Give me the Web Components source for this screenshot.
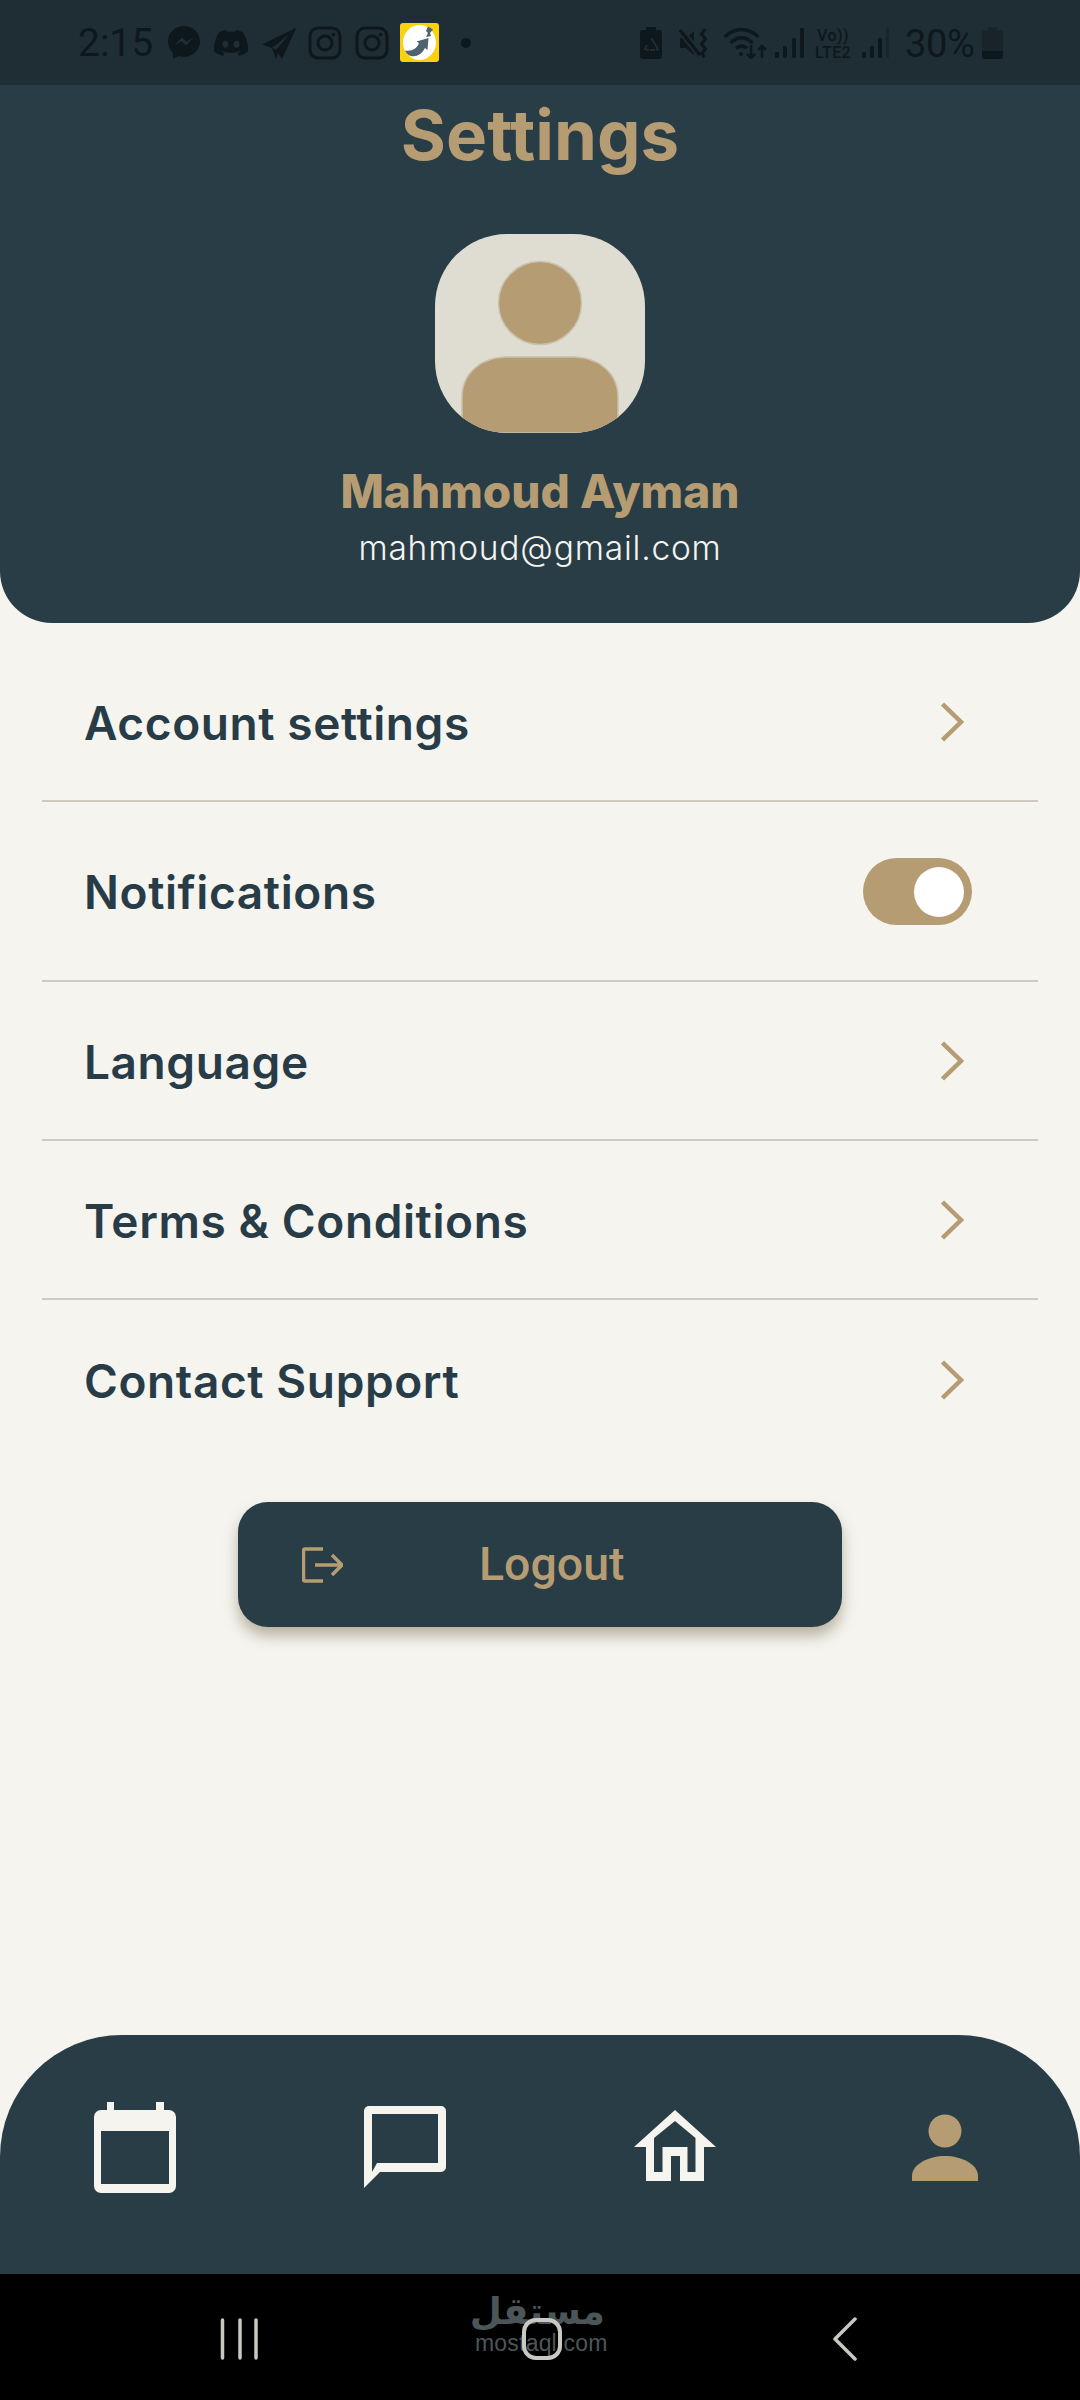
<!DOCTYPE html>
<html lang="en">
<head>
<meta charset="utf-8">
<title>Settings</title>
<style>
  html, body { margin: 0; padding: 0; }
  body {
    width: 1080px;
    height: 2400px;
    display: flex;
    flex-direction: column;
    background: #f5f4ef;
    font-family: Inter, "Noto Sans", sans-serif;
    overflow: hidden;
  }
  .spacer { flex: 1; }
</style>
</head>
<body>
  <status-bar></status-bar>
  <profile-header name="Mahmoud Ayman" email="mahmoud@gmail.com">Settings</profile-header>
  <settings-list>
    <settings-row first>Account settings</settings-row>
    <settings-row toggle>Notifications</settings-row>
    <settings-row>Language</settings-row>
    <settings-row>Terms &amp; Conditions</settings-row>
    <settings-row last>Contact Support</settings-row>
  </settings-list>
  <logout-button>Logout</logout-button>
  <div class="spacer"></div>
  <bottom-nav></bottom-nav>
  <system-nav></system-nav>

<script>
class StatusBar extends HTMLElement {
  constructor() {
    super();
    this.attachShadow({ mode: 'open' });
  }

  connectedCallback() {
    this.shadowRoot.innerHTML = `
      <style>
        :host {
          display: flex;
          align-items: center;
          justify-content: space-between;
          height: 85px;
          padding: 0 77px 0 78px;
          box-sizing: border-box;
          background: #1f2d35;
          color: #0e171c;
          font-family: Roboto, sans-serif;
        }
        .group { display: flex; align-items: center; }
        .time { font-size: 39px; font-weight: 400; width: 73px; margin-right: 16px; line-height: 1; margin-top: 2px; }
        .pct { font-size: 38px; font-weight: 400; width: 72px; margin: 0 5px 0 15px; line-height: 1; margin-top: 2px; letter-spacing: -.3px; }
        svg { display: block; flex: none; }
        .volte { width: 42px; margin: 0 8px; text-align: center; font-size: 16px; font-weight: 500; line-height: 17px; letter-spacing: .4px; margin-top: 3px; white-space: nowrap; }
      </style>
      <div class="group">
        <span class="time">2:15</span>
        <svg width="34" height="36" viewBox="0 0 34 36" fill="#0e171c">
          <path d="M17 1C8 1 1 7.600 1 16.500c0 4.700 1.900 8.700 5 11.500v6l5.600-3c1.700.5 3.500.7 5.400.7 9 0 16-6.600 16-15.200S26 1 17 1z"/>
          <path d="M7.500 20.500l7.500-8 4.500 4.300 7-4.300-7.500 8-4.500-4.300z" fill="#1f2d35"/>
        </svg>
        <svg width="34" height="34" viewBox="0 0 24 24" fill="#0e171c" style="margin-left:13px">
          <path d="M20.317 4.370a19.791 19.791 0 0 0-4.885-1.515.074.074 0 0 0-.079.037c-.21.375-.444.864-.608 1.250a18.270 18.270 0 0 0-5.487 0 12.640 12.640 0 0 0-.617-1.250.077.077 0 0 0-.079-.037A19.736 19.736 0 0 0 3.677 4.370a.07.07 0 0 0-.032.027C.533 9.046-.32 13.580.099 18.057a.082.082 0 0 0 .031.057 19.900 19.900 0 0 0 5.993 3.030.078.078 0 0 0 .084-.028c.462-.63.874-1.295 1.226-1.994a.076.076 0 0 0-.041-.106 13.107 13.107 0 0 1-1.872-.892.077.077 0 0 1-.008-.128 10.200 10.200 0 0 0 .372-.292.074.074 0 0 1 .077-.01c3.928 1.793 8.180 1.793 12.062 0a.074.074 0 0 1 .078.01c.12.098.246.198.373.292a.077.077 0 0 1-.006.127 12.299 12.299 0 0 1-1.873.892.077.077 0 0 0-.041.107c.36.698.772 1.362 1.225 1.993a.076.076 0 0 0 .084.028 19.839 19.839 0 0 0 6.002-3.030.077.077 0 0 0 .032-.054c.5-5.177-.838-9.674-3.549-13.660a.061.061 0 0 0-.031-.03zM8.020 15.330c-1.183 0-2.157-1.085-2.157-2.419 0-1.333.956-2.419 2.157-2.419 1.210 0 2.176 1.096 2.157 2.420 0 1.333-.956 2.418-2.157 2.418zm7.975 0c-1.183 0-2.157-1.085-2.157-2.419 0-1.333.955-2.419 2.157-2.419 1.210 0 2.176 1.096 2.157 2.420 0 1.333-.946 2.418-2.157 2.418z"/>
        </svg>
        <svg width="36" height="34" viewBox="0 0 36 34" fill="#0e171c" style="margin-left:13px">
          <path d="M35.500 1.500 1 18.500l10 3.500L28 8.500 15 24l1 1.500L21 33z"/>
          <path d="M11 22l4 11 3-8z"/>
        </svg>
        <svg width="34" height="34" viewBox="0 0 34 34" fill="none" stroke="#0e171c" stroke-width="3" style="margin-left:11px">
          <rect x="2" y="2" width="30" height="30" rx="8"/>
          <circle cx="17" cy="17" r="7"/>
          <circle cx="25.500" cy="8.500" r="1.800" fill="#0e171c" stroke="none"/>
        </svg>
        <svg width="34" height="34" viewBox="0 0 34 34" fill="none" stroke="#0e171c" stroke-width="3" style="margin-left:13px">
          <rect x="2" y="2" width="30" height="30" rx="8"/>
          <circle cx="17" cy="17" r="7"/>
          <circle cx="25.500" cy="8.500" r="1.800" fill="#0e171c" stroke="none"/>
        </svg>
        <svg width="39" height="39" viewBox="0 0 39 39" style="margin-left:11px">
          <rect width="39" height="39" rx="3" fill="#fbd00d"/>
          <ellipse cx="19.500" cy="19.500" rx="16.500" ry="17.500" fill="#fff"/>
          <path d="M5 27.500c7 1 12-2 14-7.500l-2.500-1.500 12-3.500-1 12-2.500-2c-3 6-8 9-14 8-3-.5-5-3-6-5.500z" fill="#4d636e"/>
          <path d="M28 3.500l5 3-3 3.500 1 3-5 1 2-4-2-2z" fill="#4d636e"/>
        </svg>
        <svg width="10" height="10" viewBox="0 0 10 10" fill="#0e171c" style="margin-left:22px">
          <circle cx="5" cy="5" r="5"/>
        </svg>
      </div>
      <div class="group">
        <svg width="24" height="32" viewBox="0 0 24 32" fill="#0e171c">
          <path d="M7 0h10v3h3a3 3 0 0 1 3 3v23a3 3 0 0 1-3 3H4a3 3 0 0 1-3-3V6a3 3 0 0 1 3-3h3z"/>
          <path d="M12 11l4 6M8 18l-2 4 4 1M16 23h-5M16 17l3 5-2 1" fill="none" stroke="#1f2d35" stroke-width="2"/>
        </svg>
        <svg width="32" height="32" viewBox="0 0 32 32" style="margin-left:16px">
          <path d="M1 11h6l8-7v24l-8-7H1z" fill="#0e171c"/>
          <path d="M1 3l20 25" stroke="#1f2d35" stroke-width="7"/>
          <path d="M1 3l20 25" stroke="#0e171c" stroke-width="3.500"/>
          <path d="M26 2l-3.500 5 4 5-4 5 4 5-4 5 3 3" fill="none" stroke="#0e171c" stroke-width="3"/>
        </svg>
        <svg width="44" height="32" viewBox="0 0 44 32" fill="none" stroke="#0e171c" stroke-width="3.500" style="margin-left:12px">
          <path d="M1.500 10C12 0 25 0 35.500 10"/>
          <path d="M7.500 16c7-7 15-7 22 0"/>
          <path d="M13 21.500c3.500-3 7.500-3 11 0"/>
          <circle cx="18" cy="27" r="2" fill="#0e171c" stroke="none"/>
          <path d="M30 18v13M26 27l4 4 4-4" stroke-width="2.500" transform="translate(-2 0)"/>
          <path d="M39 31V19M35 23l4-4 4 4" stroke-width="2.500"/>
        </svg>
        <svg width="29" height="32" viewBox="0 0 29 32" fill="#0e171c" style="margin-left:8px">
          <rect x="0" y="25" width="4" height="6" rx="1"/>
          <rect x="8" y="19" width="4" height="12" rx="1"/>
          <rect x="17" y="11" width="4" height="20" rx="1"/>
          <rect x="25" y="1" width="4" height="30" rx="1"/>
        </svg>
        <div class="volte">Vo))<br>LTE2</div>
        <svg width="28" height="32" viewBox="0 0 28 32" fill="#0e171c">
          <rect x="0" y="25" width="4" height="6" rx="1"/>
          <rect x="8" y="19" width="4" height="12" rx="1"/>
          <rect x="16" y="11" width="4" height="20" rx="1"/>
          <rect x="24" y="1" width="3" height="30" rx="1" opacity=".35"/>
        </svg>
        <span class="pct">30%</span>
        <svg width="21" height="32" viewBox="0 0 21 32" fill="#0e171c">
          <path d="M6 0h9v3h3a3 3 0 0 1 3 3v23a3 3 0 0 1-3 3H3a3 3 0 0 1-3-3V6a3 3 0 0 1 3-3h3z" opacity=".4"/>
          <path d="M0 24h21v5a3 3 0 0 1-3 3H3a3 3 0 0 1-3-3z"/>
        </svg>
      </div>
    `;
  }
}

class ProfileHeader extends HTMLElement {
  constructor() {
    super();
    this.attachShadow({ mode: 'open' });
  }

  connectedCallback() {
    const name = this.getAttribute('name') || '';
    const email = this.getAttribute('email') || '';
    this.shadowRoot.innerHTML = `
      <style>
        :host {
          display: flex;
          flex-direction: column;
          align-items: center;
          height: 538px;
          box-sizing: border-box;
          background: #293d46;
          border-radius: 0 0 52px 52px;
          font-family: Inter, sans-serif;
        }
        h1 {
          margin: 12px 0 0;
          font-size: 69px;
          line-height: 76px;
          font-weight: 700;
          color: #b59c72;
        }
        svg { display: block; margin-top: 61px; }
        .name {
          margin-top: 30px;
          font-size: 46px;
          line-height: 56px;
          font-weight: 800;
          color: #b59c72;
        }
        .email {
          margin-top: 9px;
          font-size: 33.500px;
          line-height: 40px;
          font-weight: 300;
          letter-spacing: .8px;
          color: #f5f4ef;
        }
      </style>
      <h1><slot></slot></h1>
      <svg width="210" height="199" viewBox="0 0 210 199">
        <defs><clipPath id="av"><rect width="210" height="199" rx="72"/></clipPath></defs>
        <g clip-path="url(#av)">
          <rect width="210" height="199" fill="#dfddd1"/>
          <circle cx="105" cy="69" r="41.500" fill="#b59c72" stroke="#c9c2ae" stroke-width="1.500"/>
          <path d="M27 199V163c0-24 20-40 44-40h68c24 0 44 16 44 40v36z" fill="#b59c72" stroke="#c9c2ae" stroke-width="1.500"/>
        </g>
      </svg>
      <div class="name">${name}</div>
      <div class="email">${email}</div>
    `;
  }
}

class SettingsList extends HTMLElement {
  constructor() {
    super();
    this.attachShadow({ mode: 'open' });
  }

  connectedCallback() {
    this.shadowRoot.innerHTML = `
      <style>
        :host {
          display: flex;
          flex-direction: column;
          padding: 23px 42px 0;
        }
      </style>
      <slot></slot>
    `;
  }
}

class SettingsRow extends HTMLElement {
  constructor() {
    super();
    this.attachShadow({ mode: 'open' });
  }

  connectedCallback() {
    const control = this.hasAttribute('toggle')
      ? `<span class="toggle"><span class="knob"></span></span>`
      : `<svg width="30" height="40" viewBox="0 0 30 40" fill="none" stroke="#b59c72" stroke-width="4.500"><path d="M1.500 2L20 20 1.500 38"/></svg>`;
    this.shadowRoot.innerHTML = `
      <style>
        :host {
          display: flex;
          align-items: center;
          justify-content: space-between;
          padding: 57px 66px 54px 42px;
          border-bottom: 2px solid #cfcabf;
          font-family: Inter, sans-serif;
          font-size: 46px;
          line-height: 46px;
          font-weight: 600;
          letter-spacing: .6px;
          color: #283c47;
        }
        :host([first]) { padding-top: 54px; padding-bottom: 54px; }
        :host([toggle]) { padding-top: 56px; padding-bottom: 55px; }
        :host([last]) { border-bottom: 0; padding-top: 58px; padding-bottom: 53px; }
        svg { display: block; margin-right: 1px; margin-top: -2px; }
        .toggle {
          display: flex;
          justify-content: flex-end;
          align-items: center;
          width: 109px;
          height: 67px;
          padding-right: 8px;
          box-sizing: border-box;
          border-radius: 34px;
          background: #b59c72;
        }
        .knob { width: 50px; height: 50px; border-radius: 50%; background: #fff; }
      </style>
      <span><slot></slot></span>
      ${control}
    `;
  }
}

class LogoutButton extends HTMLElement {
  constructor() {
    super();
    this.attachShadow({ mode: 'open' });
  }

  connectedCallback() {
    this.shadowRoot.innerHTML = `
      <style>
        :host {
          display: flex;
          align-items: center;
          gap: 136px;
          width: 604px;
          height: 125px;
          margin: 45px auto 0;
          padding-left: 64px;
          box-sizing: border-box;
          border-radius: 30px;
          background: #293d46;
          box-shadow: 0 9px 14px rgba(125, 115, 85, .5);
          font-family: Roboto, sans-serif;
          font-size: 46.500px;
          font-weight: 500;
          color: #b59c72;
        }
        svg { display: block; flex: none; }
        span { margin-top: -2px; }
      </style>
      <svg width="41" height="36" viewBox="0 0 41 36" fill="none" stroke="#b59c72" stroke-width="3.500">
        <path d="M21 2H3a1.500 1.500 0 0 0-1.500 1.500v29A1.500 1.500 0 0 0 3 34h18"/>
        <path d="M13 18h26M30 8l10 10-10 10"/>
      </svg>
      <span><slot></slot></span>
    `;
  }
}

class BottomNav extends HTMLElement {
  constructor() {
    super();
    this.attachShadow({ mode: 'open' });
  }

  connectedCallback() {
    this.shadowRoot.innerHTML = `
      <style>
        :host {
          display: grid;
          grid-template-columns: repeat(4, 1fr);
          justify-items: center;
          align-items: start;
          height: 239px;
          padding-top: 65px;
          box-sizing: border-box;
          background: #293d46;
          border-radius: 122px 122px 0 0;
        }
        svg { display: block; }
      </style>
      <svg width="96" height="96" viewBox="0 0 96 96" fill="#f5f4ef" fill-rule="evenodd">
        <path d="M20 2h7v8h42V2h8v8h5a7 7 0 0 1 7 7v69a7 7 0 0 1-7 7H14a7 7 0 0 1-7-7V17a7 7 0 0 1 7-7h6zM14 31v53h68V31z"/>
      </svg>
      <svg width="96" height="96" viewBox="0 0 96 96" fill="#f5f4ef" fill-rule="evenodd">
        <path d="M12 6h72a5 5 0 0 1 5 5v56a5 5 0 0 1-5 5H23L7 88V11a5 5 0 0 1 5-5zM15 14v58l5-9h61V14z"/>
      </svg>
      <svg width="96" height="96" viewBox="0 0 96 96" fill="#f5f4ef" fill-rule="evenodd">
        <path d="M48 10L89 47H77V81H53V56H44V81H19V47H7zM48 21L27 38V72H35.500V47H60.500V72H68.500V38z"/>
      </svg>
      <svg width="96" height="96" viewBox="0 0 96 96" fill="#b59c72">
        <circle cx="48" cy="31" r="16.500"/>
        <path d="M15 81V76C15 64 32 56 48 56S81 64 81 76V81z"/>
      </svg>
    `;
  }
}

class SystemNav extends HTMLElement {
  constructor() {
    super();
    this.attachShadow({ mode: 'open' });
  }

  connectedCallback() {
    this.shadowRoot.innerHTML = `
      <style>
        :host {
          position: relative;
          display: flex;
          align-items: center;
          height: 126px;
          padding: 4px 0 0 220px;
          box-sizing: border-box;
          background: #000;
        }
        svg { display: block; flex: none; position: relative; }
        .mark {
          position: absolute;
          left: 475px;
          top: 17px;
          width: 130px;
          text-align: center;
          color: #4c5659;
          white-space: nowrap;
        }
        .ar { font-family: "DejaVu Sans", sans-serif; font-weight: 700; font-size: 37px; line-height: 42px; height: 42px; direction: rtl; }
        .en { font-family: "Liberation Sans", sans-serif; font-weight: 400; font-size: 23px; line-height: 20px; letter-spacing: .2px; }
      </style>
      <div class="mark">
        <div class="ar" lang="ar">مستقل</div>
        <div class="en">mostaql.com</div>
      </div>
      <svg width="40" height="42" viewBox="0 0 40 42" stroke="#c9c9c4" stroke-width="3.500" stroke-linecap="round">
        <path d="M2.500 2v38M20 2v38M36 2v38"/>
      </svg>
      <svg width="42" height="42" viewBox="0 0 42 42" fill="none" stroke="#c9c9c4" stroke-width="4" style="margin-left:261px">
        <rect x="3" y="2" width="36" height="38" rx="12"/>
      </svg>
      <svg width="24" height="44" viewBox="0 0 24 44" fill="none" stroke="#c9c9c4" stroke-width="3.500" stroke-linecap="round" stroke-linejoin="round" style="margin-left:270px">
        <path d="M22 2L2 22l20 20"/>
      </svg>
    `;
  }
}

customElements.define('status-bar', StatusBar);
customElements.define('profile-header', ProfileHeader);
customElements.define('settings-list', SettingsList);
customElements.define('settings-row', SettingsRow);
customElements.define('logout-button', LogoutButton);
customElements.define('bottom-nav', BottomNav);
customElements.define('system-nav', SystemNav);
</script>
</body>
</html>
